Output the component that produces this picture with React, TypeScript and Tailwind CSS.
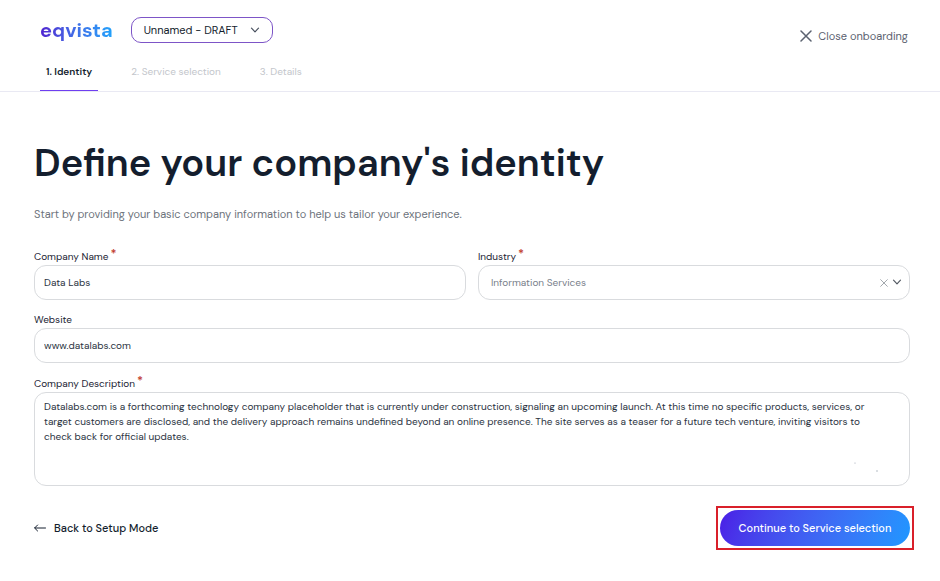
import { useState, type ReactNode } from 'react'
import clsx from 'clsx'

const steps = ['1. Identity', '2. Service selection', '3. Details']

const box = 'w-full rounded-xl border border-[#d9dbde] bg-white text-[10px] outline-none'

function Chevron({ className }: { className?: string }) {
  return (
    <svg viewBox="0 0 10 10" fill="none" stroke="currentColor" strokeWidth="1.2" strokeLinecap="round" strokeLinejoin="round" className={className}>
      <path d="M1.5 3.2 5 6.8l3.5-3.6" />
    </svg>
  )
}

function Cross({ className }: { className?: string }) {
  return (
    <svg viewBox="0 0 12 12" fill="none" stroke="currentColor" strokeWidth="1.5" strokeLinecap="round" className={className}>
      <path d="M1 1l10 10M11 1 1 11" />
    </svg>
  )
}

type FieldProps = { id: string; label: string; required?: boolean; children: ReactNode }

/** Label above a control, with a raised red star when it must be filled in. */
function Field({ id, label, required, children }: FieldProps) {
  return (
    <div className="min-w-0 flex-1">
      <label htmlFor={id} className="flex h-4 items-start gap-0.5 text-[10px] leading-4 text-[#1b2433]">
        {label}
        {required && <span className="text-xs leading-2 font-semibold text-[#c0392b]">*</span>}
      </label>
      {children}
    </div>
  )
}

export default function App() {
  const [name, setName] = useState('Data Labs')
  const [industry, setIndustry] = useState('Information Services')
  const [website, setWebsite] = useState('www.datalabs.com')
  const [description, setDescription] = useState(
    'Datalabs.com is a forthcoming technology company placeholder that is currently under construction, signaling an upcoming launch. At this time no specific products, services, or target customers are disclosed, and the delivery approach remains undefined beyond an online presence. The site serves as a teaser for a future tech venture, inviting visitors to check back for official updates.',
  )

  return (
    <div className="min-h-screen bg-white font-['DM_Sans','Inter',sans-serif] text-[#141e2e]">
      <header className="border-b border-[#e9e9f3] pr-8 pl-10">
        <div className="flex items-start justify-between pt-4">
          <div className="flex items-center gap-[18px]">
            <a
              href="#"
              className="bg-linear-to-r from-[#4f1fd0] via-[#3f6fe8] to-[#1fa2fb] bg-clip-text text-xl leading-7 font-bold text-transparent"
            >
              eqvista
            </a>
            <button className="flex h-[26px] w-[142px] items-center justify-between rounded-[10px] border border-[#7d55c7] px-3 text-[11px]">
              Unnamed - DRAFT
              <Chevron className="size-2.5 text-[#4a5260]" />
            </button>
          </div>
          <button className="mt-3 flex items-center gap-1.5 text-[11px] leading-4 text-[#5b6270]">
            <Cross className="size-3" />
            Close onboarding
          </button>
        </div>
        <nav className="mt-4 flex gap-[27px] text-[10px] leading-4">
          {steps.map((s, i) => (
            <a
              key={s}
              href="#"
              className={clsx(
                'border-b px-1.5 pt-1 pb-2.5',
                i === 0 ? 'border-[#6f3ff0] font-semibold text-[#141e2e]' : 'border-transparent text-[#c3c6cb]',
              )}
            >
              {s}
            </a>
          ))}
        </nav>
      </header>

      <main className="pt-11 pr-[30px] pl-[34px]">
        <h1 className="text-[38px] leading-[54px] font-semibold">Define your company's identity</h1>
        <p className="mt-4 text-[11px] leading-4 text-[#6d737c]">
          Start by providing your basic company information to help us tailor your experience.
        </p>

        <form className="mt-[27px]" onSubmit={(e) => e.preventDefault()}>
          <div className="flex gap-3">
            <Field id="name" label="Company Name" required>
              <input id="name" value={name} onChange={(e) => setName(e.target.value)} className={clsx(box, 'block h-[35px] px-[9px] text-[#2b3442]')} />
            </Field>
            <Field id="industry" label="Industry" required>
              <div className="relative">
                <select
                  id="industry"
                  value={industry}
                  onChange={(e) => setIndustry(e.target.value)}
                  className={clsx(box, 'block h-[35px] appearance-none px-3 text-[#7a818b]')}
                >
                  <option value="" />
                  <option>Information Services</option>
                </select>
                <button
                  type="button"
                  aria-label="Clear industry"
                  onClick={() => setIndustry('')}
                  className="absolute inset-y-0 right-[22px] text-[#a3a8ae]"
                >
                  <Cross className="size-2" />
                </button>
                <Chevron className="pointer-events-none absolute top-3 right-2 size-2.5 text-[#555b64]" />
              </div>
            </Field>
          </div>

          <div className="mt-3">
            <Field id="website" label="Website">
              <input id="website" value={website} onChange={(e) => setWebsite(e.target.value)} className={clsx(box, 'block h-[35px] px-[9px] text-[#2b3442]')} />
            </Field>
          </div>

          <div className="mt-[13px]">
            <Field id="description" label="Company Description" required>
              <div className="relative">
                <textarea
                  id="description"
                  value={description}
                  onChange={(e) => setDescription(e.target.value)}
                  className={clsx(box, 'block h-[94px] resize-none py-1.5 pr-5 pl-[9px] leading-[15px] text-[#2b3442]')}
                />
                {/* faint grip dots */}
                <svg viewBox="0 0 24 10" fill="#9aa3b0" className="pointer-events-none absolute right-8 bottom-3.5 h-2.5 w-6">
                  <circle cx="1" cy="1" r="0.6" />
                  <circle cx="23" cy="9" r="0.7" />
                </svg>
              </div>
            </Field>
          </div>

          <div className="mt-5 flex items-center justify-between">
            <button type="button" className="flex items-center gap-2 text-[11px] leading-4 font-medium">
              <svg viewBox="0 0 12 8" fill="none" stroke="currentColor" strokeLinecap="round" strokeLinejoin="round" className="h-2 w-3">
                <path d="M11.5 4H.8M3.6 1 .6 4l3 3" />
              </svg>
              Back to Setup Mode
            </button>
            <div className="-mr-1 border-2 border-[#d9202a] p-0.5">
              <button className="block h-9 w-[190px] rounded-full bg-linear-110 from-[#4a1ce6] to-[#1e97ff] text-[11px] font-medium text-white">
                Continue to Service selection
              </button>
            </div>
          </div>
        </form>
      </main>
    </div>
  )
}
